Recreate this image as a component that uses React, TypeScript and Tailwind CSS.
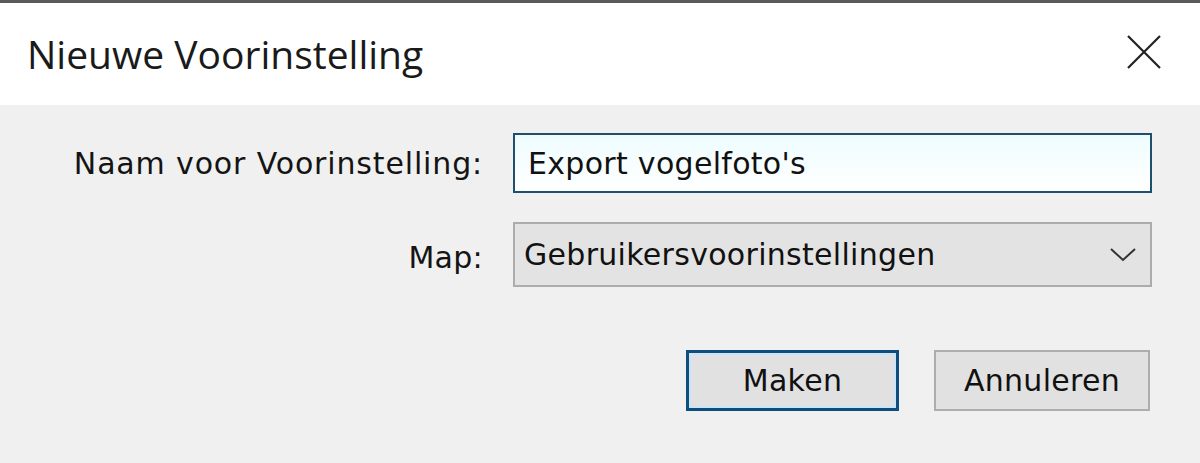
import React from "react";

export default function App() {
  return (
    <div className="w-[1200px] h-[463px] bg-[#f0f0f0] border-t-[3px] border-[#5a5a5a] flex flex-col overflow-hidden" style={{ fontFamily: "'DejaVu Sans', sans-serif" }}>
      <div className="h-[102px] bg-white flex items-center justify-between pl-[27px] pr-[38px] shrink-0">
        <span className="text-[39px] text-[#1a1a1a] leading-none pb-[2px]" style={{ fontFamily: "'Open Sans', sans-serif" }}>Nieuwe Voorinstelling</span>
        <svg width="36" height="36" viewBox="0 0 36 36" className="mb-[4px]">
          <path d="M2 2 L34 34 M34 2 L2 34" stroke="#222" strokeWidth="2.2" />
        </svg>
      </div>
      <div className="flex-1 pt-[28px] pr-[48px] text-[30px] tracking-[0.3px]">
        <div className="grid grid-cols-[483px_639px] gap-x-[30px] gap-y-[29px] items-center">
          <div className="text-right text-[#141414] tracking-[0.85px]">Naam voor Voorinstelling:</div>
          <div className="h-[60px] border-2 border-[#1f4f6e] bg-gradient-to-b from-[#eefcff] to-white flex items-center pl-[13px] text-[#111]">Export vogelfoto's</div>
          <div className="text-right text-[#141414] pt-[6px]">Map:</div>
          <div className="h-[65px] border-2 border-[#acacac] bg-[#e3e3e3] flex items-center justify-between pl-[9px] pr-[14px] text-[#111]">
            <span>Gebruikersvoorinstellingen</span>
            <svg width="26" height="14" viewBox="0 0 26 14">
              <path d="M1 1 L13 12 L25 1" fill="none" stroke="#333" strokeWidth="2" />
            </svg>
          </div>
        </div>
        <div className="flex justify-end gap-[35px] mt-[63px] pr-[2px]">
          <button className="w-[213px] h-[61px] border-[3px] border-[#0d4f7c] bg-[#e1e1e1] shadow-[inset_0_0_0_2px_#cce4f7] text-[#111]">Maken</button>
          <button className="w-[216px] h-[61px] border-2 border-[#adadad] bg-[#e1e1e1] text-[#111]">Annuleren</button>
        </div>
      </div>
    </div>
  );
}
